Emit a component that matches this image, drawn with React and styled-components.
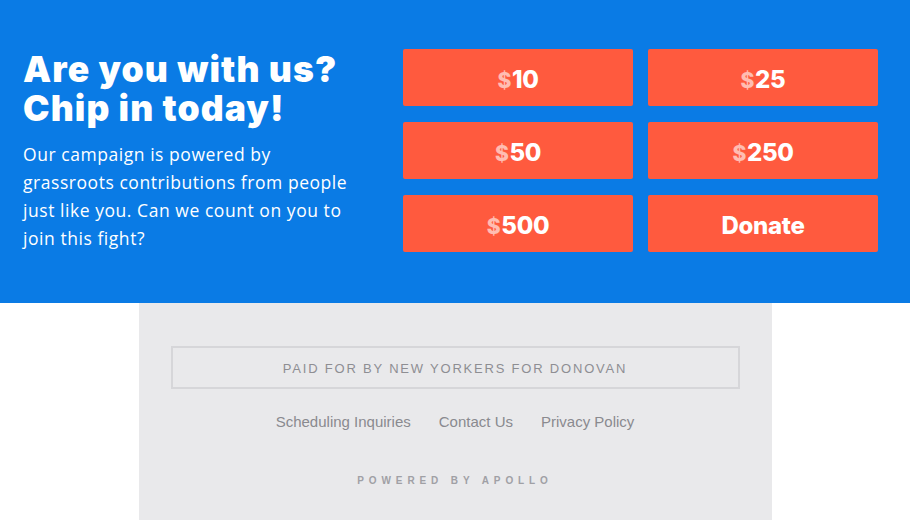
import React from "react";
import styled, { createGlobalStyle } from "styled-components";

const GlobalStyle = createGlobalStyle`
  body {
    margin: 0;
    background: #fff;
    font-family: "Open Sans", "Liberation Sans", sans-serif;
  }
`;

const amounts = ["10", "25", "50", "250", "500"];

const App = () => {
  return (
    <>
      <GlobalStyle />
      <Hero>
        <Intro>
          <Title>
            <span>Are you with us?</span>
            <span>Chip in today!</span>
          </Title>
          <Lead>
            Our campaign is powered by grassroots contributions from people
            just like you. Can we count on you to join this fight?
          </Lead>
        </Intro>
        <Amounts>
          {amounts.map((a) => (
            <AmountButton key={a}>
              <Dollar>$</Dollar>{a}
            </AmountButton>
          ))}
          <AmountButton>Donate</AmountButton>
        </Amounts>
      </Hero>
      <Footer>
        <PaidFor>Paid for by New Yorkers for Donovan</PaidFor>
        <Links>
          <a href="#">Scheduling Inquiries</a>
          <a href="#">Contact Us</a>
          <a href="#">Privacy Policy</a>
        </Links>
        <Powered>Powered by Apollo</Powered>
      </Footer>
    </>
  );
};

const Hero = styled.section`
  background: #0a7be5;
  height: 303px;
  box-sizing: border-box;
  padding: 49px 32px 0 23px;
  display: grid;
  grid-template-columns: 380px 1fr;
`;

const Intro = styled.div`
  color: #fff;
  padding-top: 2px;
`;

const Title = styled.h1`
  margin: 0 0 12px;
  display: flex;
  flex-direction: column;
  font-family: "Inter", sans-serif;
  font-weight: 900;
  font-size: 35.5px;
  line-height: 38.5px;
  letter-spacing: 1.1px;
`;

const Lead = styled.p`
  margin: 0;
  max-width: 335px;
  font-size: 17.5px;
  line-height: 28px;
  font-weight: 400;
  letter-spacing: 0.55px;
`;

const Amounts = styled.div`
  display: grid;
  grid-template-columns: 1fr 1fr;
  grid-auto-rows: 57px;
  column-gap: 15px;
  row-gap: 16px;
`;

const AmountButton = styled.button`
  border: none;
  border-radius: 2px;
  background: #ff5a3e;
  color: #fff;
  padding: 4px 0 0;
  font-family: "Inter", sans-serif;
  font-weight: 800;
  font-size: 24px;
  letter-spacing: -0.3px;
  cursor: pointer;
`;

const Dollar = styled.span`
  opacity: 0.6;
  font-size: 21px;
  margin-right: 1px;
`;

const Footer = styled.footer`
  width: 633px;
  min-height: 217px;
  margin: 0 auto;
  background: #e9e9eb;
  padding: 43px 32px 30px;
  box-sizing: border-box;
  display: flex;
  flex-direction: column;
  align-items: center;
  font-family: "Liberation Sans", sans-serif;
`;

const PaidFor = styled.div`
  width: 100%;
  height: 43px;
  box-sizing: border-box;
  border: 2px solid #d6d6d9;
  padding-top: 2px;
  display: flex;
  align-items: center;
  justify-content: center;
  text-transform: uppercase;
  font-size: 13px;
  letter-spacing: 1.8px;
  color: #8e8e93;
`;

const Links = styled.nav`
  display: flex;
  gap: 28px;
  margin-top: 24px;
  a {
    color: #8a8a8f;
    text-decoration: none;
    font-size: 15px;
  }
`;

const Powered = styled.div`
  margin-top: 45px;
  text-transform: uppercase;
  font-size: 10px;
  font-weight: 700;
  letter-spacing: 4.9px;
  color: #a0a0a5;
`;

export default App;
